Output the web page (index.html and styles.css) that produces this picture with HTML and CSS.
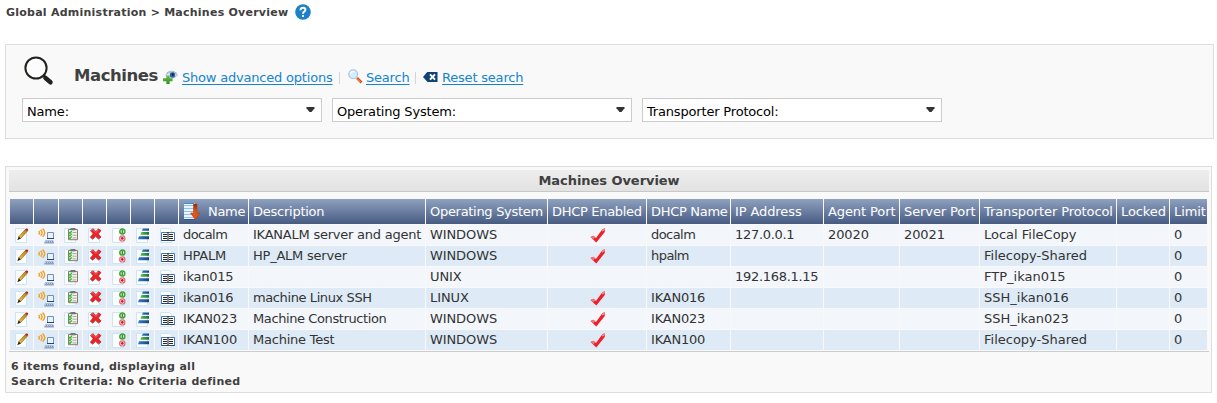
FILE: index.html
```
<!DOCTYPE html>
<html lang="en">
<head>
<meta charset="utf-8">
<title>Machines Overview</title>
<link rel="stylesheet" href="styles.css">
</head>
<body>
<svg class="defs" width="0" height="0" aria-hidden="true">
  <defs>
    <linearGradient id="gold" x1="0" y1="1" x2="1" y2="0"><stop offset="0" stop-color="#f6c640"/><stop offset="1" stop-color="#b97b10"/></linearGradient>
    <linearGradient id="green" x1="0" y1="0" x2="0" y2="1"><stop offset="0" stop-color="#6cc04a"/><stop offset="1" stop-color="#2c8a24"/></linearGradient>
    <linearGradient id="arrow" x1="0" y1="0" x2="0" y2="1"><stop offset="0" stop-color="#8e2a08"/><stop offset=".5" stop-color="#e2581a"/><stop offset="1" stop-color="#e04c10"/></linearGradient>
    <linearGradient id="blue" x1="0" y1="0" x2="1" y2="0"><stop offset="0" stop-color="#2f7fd0"/><stop offset="1" stop-color="#1c4470"/></linearGradient>
    <linearGradient id="leaf" x1="0" y1="0" x2="1" y2="0"><stop offset="0" stop-color="#5cc243"/><stop offset="1" stop-color="#177046"/></linearGradient>
  </defs>
  <symbol id="page" viewBox="0 0 16 16"><path d="M1.500.5h9l2 2v12h-11z" fill="#fbfdff" stroke="#cde5f3"/></symbol>
  <symbol id="edit" viewBox="0 0 16 16"><use href="#page" width="16" height="16"/><path d="M4.700 8.800 11.200 1.600l2 1.700-6.500 7.200z" fill="url(#gold)" stroke="#8a5a14" stroke-width=".6"/><path d="m11 1.800 1-1.200q1.900-.6 2.300 1.300l-1.100 1.400z" fill="#b52a20"/><path d="m4.700 8.500 2.200 2L3.300 12.200z" fill="#2b2118"/></symbol>
  <symbol id="signal" viewBox="0 0 16 16"><g fill="none" stroke="#f0a32c" stroke-width="1.500"><path d="M.6 3q1.800 1.700 0 3.400M2.600 1.800q3 2.900 0 5.800M4.600.6q4.300 4.100 0 8.200"/></g><path d="M9.500 4.500h6v6h-6z" fill="#e5f4fc" stroke="#7390b8"/><path d="M9 10h7v1H9z" fill="#29456f"/><path d="M7 12.500h8.500l.5 3H6.200z" fill="#7c96be"/><path d="M7 13.500h8.500M6.500 15h9" stroke="#dfe8f5" stroke-width=".7" stroke-dasharray="1 1"/></symbol>
  <symbol id="tasks" viewBox="0 0 16 16"><use href="#page" width="16" height="16"/><path d="M5.500 1.500h9v10.200h-9z" fill="#f2f2ec" stroke="#8c7a67"/><path d="M7.500 0h5v2.300h-5z" fill="#70777a"/><path d="M9.500 4.500h4M9.500 7.200h4M9.500 9.900h4" stroke="#8f9690" stroke-width=".8"/><path d="m5.700 4 1.200 1.200L8.800 3M5.700 6.700l1.200 1.200 1.900-2.200M5.700 9.400l1.200 1.200 1.900-2.200" fill="none" stroke="#37b535" stroke-width="1.300"/></symbol>
  <symbol id="delete" viewBox="0 0 16 16"><use href="#page" width="16" height="16"/><path d="m3.500 2.500 2.500-1.800L8.900 3.500l2.600-2.700 2.500 1.800-2.900 3.300 3 3.100-2.600 2.100-2.900-2.800-2.900 2.900-2.400-2 2.900-3.400z" fill="#e8262a" stroke="#bd1620" stroke-width=".7"/><path d="m4.400 2.500 1.500-.9 3 3 2.600-2.900" fill="none" stroke="#f7777a" stroke-width=".7"/></symbol>
  <symbol id="status" viewBox="0 0 16 16"><use href="#page" width="16" height="16"/><circle cx="11.300" cy="3.600" r="2.500" fill="#edf9e8" stroke="#45a331" stroke-width="1.500"/><path d="M11.300 1.700v3.600" stroke="#318b23" stroke-width="1.300"/><circle cx="11.300" cy="10.400" r="2.600" fill="#fff" stroke="#df6a72" stroke-width="1.200"/><circle cx="11.300" cy="10.400" r="1.400" fill="#cf1929"/></symbol>
  <symbol id="levels" viewBox="0 0 16 16"><use href="#page" width="16" height="16"/><path d="M8 .4h6v2.300H6.700z" fill="url(#blue)"/><path d="M6.500 4H14v2.800H5.400z" fill="url(#leaf)"/><path d="M4 8.300h10v2.900H3z" fill="url(#blue)"/></symbol>
  <symbol id="book" viewBox="0 0 16 16"><use href="#page" width="16" height="16"/><path d="M2.500 4.500h13v8h-13z" fill="#fff" stroke="#4b76ad"/><path d="M9 4v9M4 6.500h4M4 8.500h4M4 10.500h4M10 6.500h4M10 8.500h4M10 10.500h4" stroke="#25282b" stroke-width="1.100"/><path d="M2.500 12.500h13" stroke="#284869"/></symbol>
  <symbol id="check" viewBox="0 0 16 16"><path d="m.5 9 3-1.300L6 10l5.800-8Q13.300.4 14.800.3v3.600L6.300 14.400z" fill="#ef2027"/><path d="m.5 9 3-1.300L5 9.300l-1.300 1.900z" fill="#f4777a"/><path d="m11.500 2.700 2.300-2h1v1.200l-2.200 1.700z" fill="#f69092"/></symbol>
</svg>

<nav class="breadcrumb">
  <span class="breadcrumb-text">Global Administration &gt; Machines Overview</span>
  <svg class="help" viewBox="0 0 16 16"><circle cx="8" cy="8" r="7.800" fill="#1c81c8"/><path d="M5.500 6.200Q5.600 3.800 8 3.800t2.400 2Q10.400 7 9.200 7.700 8 8.400 8 9.700" fill="none" stroke="#fff" stroke-width="2"/><path d="M7 11h2v2H7z" fill="#fff"/></svg>
</nav>

<section class="search-panel">
  <header class="search-head">
    <svg class="lens" viewBox="0 0 32 32"><circle cx="14" cy="13" r="10.600" fill="#fcfcfc" stroke="#23221e" stroke-width="2"/><path d="m21 20 2.500 2.500" stroke="#23221e" stroke-width="2.500"/><path d="m23.500 23 5 4.300" stroke="#23221e" stroke-width="4.500" stroke-linecap="round"/></svg>
    <h1>Machines</h1>
    <svg class="icon options-icon" viewBox="0 0 16 16"><path d="M3 4.500Q9-.5 14.500 5 9.500 11 3 5.500z" fill="#dcebf7" stroke="#9fbad4"/><path d="M3.500 3Q9-1 14 3.500" fill="none" stroke="#a7bacd"/><circle cx="9.500" cy="5" r="2.700" fill="#2f659f"/><circle cx="9.800" cy="4.500" r="1.200" fill="#10284d"/><path d="M3.400 5.500h3.200v2.800H9.500v3H6.600V14H3.400v-2.700H0v-3h3.400z" fill="url(#green)"/></svg>
    <a href="#" class="link-options">Show advanced options</a>
    <i class="rule"></i>
    <svg class="icon search-icon" viewBox="0 0 16 16"><path d="m9 9 4.500 4.500" stroke="#da4714" stroke-width="2.500"/><path d="m9 9.500 3.500 3.500" stroke="#f6b53e"/><circle cx="5.200" cy="5.300" r="4.400" fill="#d5edfc" stroke="#adc6ea" stroke-width="1.300"/><path d="M2.500 4.500q1-2.300 3.500-2" fill="none" stroke="#fff" stroke-width="1.300"/></svg>
    <a href="#" class="link-search">Search</a>
    <i class="rule"></i>
    <svg class="icon reset-icon" viewBox="0 0 16 16"><path d="m0 8 4.200-5H14.500v10H4.500z" fill="#0e4379"/><path d="m7 5.400 5 5.200m0-5.200-5 5.200" stroke="#fff" stroke-width="2"/></svg>
    <a href="#" class="link-reset">Reset search</a>
  </header>
  <div class="filters">
    <div class="select"><span>Name:</span><svg class="caret" viewBox="0 0 9 5"><path d="M.5 0h8v1.200L5.500 5h-2L.5 1.200z"/></svg></div>
    <div class="select"><span>Operating System:</span><svg class="caret" viewBox="0 0 9 5"><path d="M.5 0h8v1.200L5.500 5h-2L.5 1.200z"/></svg></div>
    <div class="select"><span>Transporter Protocol:</span><svg class="caret" viewBox="0 0 9 5"><path d="M.5 0h8v1.200L5.500 5h-2L.5 1.200z"/></svg></div>
  </div>
</section>

<section class="list-panel">
  <h2><span>Machines Overview</span></h2>
  <table>
    <colgroup><col class="c-icon"><col class="c-signal"><col class="c-icon"><col class="c-icon"><col class="c-icon"><col class="c-icon"><col class="c-icon"><col class="c-name"><col class="c-desc"><col class="c-os"><col class="c-dhcp"><col class="c-dname"><col class="c-ip"><col class="c-agent"><col class="c-server"><col class="c-proto"><col class="c-locked"><col class="c-limit"></colgroup>
    <thead><tr><th></th><th></th><th></th><th></th><th></th><th></th><th></th>
      <th><div class="sorted"><svg class="sort" viewBox="0 0 18 18"><path d="M1 0h11v17H1z" fill="#e8f4ff"/><path d="M1 2.500h10M1 5.500h10M1 8.500h10M1 11.500h10M1 14.500h10" stroke="#8cc2ee"/><path d="M1 .5h10" stroke="#3f8fd8"/><path d="M1 16.500h11" stroke="#285b9c"/><path d="M10.500 1H14v9h3l-4.700 6.500L7.500 10h3z" fill="url(#arrow)" stroke="#b83c0c" stroke-width=".6"/></svg><span>Name</span></div></th>
      <th>Description</th><th>Operating System</th><th>DHCP Enabled</th><th>DHCP Name</th><th>IP Address</th><th>Agent Port</th><th>Server Port</th><th>Transporter Protocol</th><th>Locked</th><th>Limit</th></tr></thead>
    <tbody>
      <tr><td><svg><use href="#edit"/></svg></td><td><svg><use href="#signal"/></svg></td><td><svg><use href="#tasks"/></svg></td><td><svg><use href="#delete"/></svg></td><td><svg><use href="#status"/></svg></td><td><svg><use href="#levels"/></svg></td><td><svg><use href="#book"/></svg></td><td class="tight">docalm</td><td>IKANALM server and agent</td><td>WINDOWS</td><td class="mark"><svg><use href="#check"/></svg></td><td class="tight">docalm</td><td>127.0.0.1</td><td>20020</td><td>20021</td><td>Local FileCopy</td><td></td><td>0</td></tr>
      <tr><td><svg><use href="#edit"/></svg></td><td><svg><use href="#signal"/></svg></td><td><svg><use href="#tasks"/></svg></td><td><svg><use href="#delete"/></svg></td><td><svg><use href="#status"/></svg></td><td><svg><use href="#levels"/></svg></td><td><svg><use href="#book"/></svg></td><td>HPALM</td><td>HP_ALM server</td><td>WINDOWS</td><td class="mark"><svg><use href="#check"/></svg></td><td class="tight">hpalm</td><td></td><td></td><td></td><td>Filecopy-Shared</td><td></td><td>0</td></tr>
      <tr><td><svg><use href="#edit"/></svg></td><td><svg><use href="#signal"/></svg></td><td><svg><use href="#tasks"/></svg></td><td><svg><use href="#delete"/></svg></td><td><svg><use href="#status"/></svg></td><td><svg><use href="#levels"/></svg></td><td><svg><use href="#book"/></svg></td><td>ikan015</td><td></td><td>UNIX</td><td></td><td></td><td>192.168.1.15</td><td></td><td></td><td>FTP_ikan015</td><td></td><td>0</td></tr>
      <tr><td><svg><use href="#edit"/></svg></td><td><svg><use href="#signal"/></svg></td><td><svg><use href="#tasks"/></svg></td><td><svg><use href="#delete"/></svg></td><td><svg><use href="#status"/></svg></td><td><svg><use href="#levels"/></svg></td><td><svg><use href="#book"/></svg></td><td>ikan016</td><td class="snug">machine Linux SSH</td><td>LINUX</td><td class="mark"><svg><use href="#check"/></svg></td><td>IKAN016</td><td></td><td></td><td></td><td>SSH_ikan016</td><td></td><td>0</td></tr>
      <tr><td><svg><use href="#edit"/></svg></td><td><svg><use href="#signal"/></svg></td><td><svg><use href="#tasks"/></svg></td><td><svg><use href="#delete"/></svg></td><td><svg><use href="#status"/></svg></td><td><svg><use href="#levels"/></svg></td><td><svg><use href="#book"/></svg></td><td>IKAN023</td><td class="snug">Machine Construction</td><td>WINDOWS</td><td class="mark"><svg><use href="#check"/></svg></td><td>IKAN023</td><td></td><td></td><td></td><td>SSH_ikan023</td><td></td><td>0</td></tr>
      <tr><td><svg><use href="#edit"/></svg></td><td><svg><use href="#signal"/></svg></td><td><svg><use href="#tasks"/></svg></td><td><svg><use href="#delete"/></svg></td><td><svg><use href="#status"/></svg></td><td><svg><use href="#levels"/></svg></td><td><svg><use href="#book"/></svg></td><td>IKAN100</td><td>Machine Test</td><td>WINDOWS</td><td class="mark"><svg><use href="#check"/></svg></td><td>IKAN100</td><td></td><td></td><td></td><td>Filecopy-Shared</td><td></td><td>0</td></tr>
    </tbody>
  </table>
  <footer><p>6 items found, displaying all</p><p>Search Criteria: No Criteria defined</p></footer>
</section>
</body>
</html>
```

FILE: styles.css
```
* { box-sizing: border-box; }
body { margin: 0; padding: 4px 0 0 5px; background: #fff; color: #333; font: 13px/16px Verdana, "DejaVu Sans", sans-serif; }
svg { display: block; flex: none; }
.defs { height: 0; }
.breadcrumb { display: flex; align-items: center; height: 16px; padding-left: 1px; font-size: 11px; font-weight: bold; letter-spacing: .24px; color: #404040; }
.breadcrumb-text { width: 284px; padding-top: 1px; white-space: nowrap; }
.help { width: 16px; height: 16px; margin-left: 5px; }

.search-panel { width: 1209px; height: 95px; margin-top: 24px; padding: 8px 16px; border: 1px solid #ddd; background: #f9f9f9; }
.search-head { display: flex; height: 45px; }
.lens { width: 32px; height: 32px; margin-top: 2px; }
h1 { width: 89px; margin: 12px 0 0 20px; font-size: 16.5px; line-height: 22px; letter-spacing: -.45px; color: #404040; white-space: nowrap; }
.icon { width: 16px; height: 16px; margin-top: 17px; }
.search-head a { margin-top: 16px; line-height: 17px; letter-spacing: -.2px; color: #1484d0; text-underline-offset: 2px; white-space: nowrap; }
.link-options { width: 151px; margin-left: 3px; }
.rule { width: 1px; height: 12px; margin: 19px 0 0 6px; background: #d4d4d4; }
.icon.search-icon { margin: 16px 0 0 8px; }
.link-search { width: 43px; margin-left: 2px; }
.icon.reset-icon { margin: 16px 0 0 7px; }
.link-reset { margin-left: 3px; }
.filters { display: flex; gap: 10px; }
.select { display: flex; justify-content: space-between; width: 300px; height: 24px; padding: 5px 6px 0 4px; border: 1px solid #ccc; background: #fff; color: #000; letter-spacing: -.18px; }
.caret { width: 9px; height: 5px; margin-top: 3px; fill: #333; }

.list-panel { width: 1207px; height: 227px; margin-top: 27px; padding: 3px 2px; border: 1px solid #ddd; background: #f9f9f9; }
h2 { height: 22px; margin: 0 0 6px 1px; border-bottom: 1px solid #c8c8c8; background: linear-gradient(#eee, #e2e2e2); font-size: 13px; line-height: 22px; letter-spacing: -.05px; text-align: center; color: #404040; }
table { table-layout: fixed; width: 1199px; margin-left: 1px; border-collapse: separate; border-spacing: 1px; }
.c-icon { width: 23px; } .c-signal { width: 24px; } .c-name { width: 69px; } .c-desc { width: 176px; } .c-os { width: 121px; }
.c-dhcp { width: 98px; } .c-dname { width: 83px; } .c-ip { width: 92px; } .c-agent { width: 75px; } .c-server { width: 79px; }
.c-proto { width: 136px; } .c-locked { width: 52px; } .c-limit { width: 37px; }
th, td { padding: 0 4px; text-align: left; vertical-align: middle; white-space: nowrap; letter-spacing: -.1px; }
th { height: 25px; background: linear-gradient(#8fa1bf, #475b82); color: #fff; font-weight: normal; letter-spacing: -.3px; }
th:nth-child(9) { letter-spacing: -.25px; }
th:nth-child(n+13) { letter-spacing: -.1px; }
td { height: 20px; line-height: 19px; padding-bottom: 1px; background: #f3f7fc; color: #333; }
tr:nth-child(even) td { background: #deebf6; }
td:nth-child(8), td:nth-child(9) { letter-spacing: -.23px; }
td:nth-child(12) { letter-spacing: -.2px; }
td:nth-child(13) { letter-spacing: -.3px; }
td:nth-child(16) { letter-spacing: 0; }
td.tight { letter-spacing: -.55px; }
td.snug { letter-spacing: -.4px; }
td svg { width: 16px; height: 16px; margin-top: 3px; }
.mark svg { margin-left: 38px; }
.sorted { display: flex; align-items: center; gap: 7px; }
.sort { width: 18px; height: 18px; }
footer { margin: 0 0 0 1px; padding: 7px 2px; border-top: 1px solid #ccc; font-size: 11px; font-weight: bold; line-height: 15px; letter-spacing: .28px; color: #404040; }
p { margin: 0; }
```
